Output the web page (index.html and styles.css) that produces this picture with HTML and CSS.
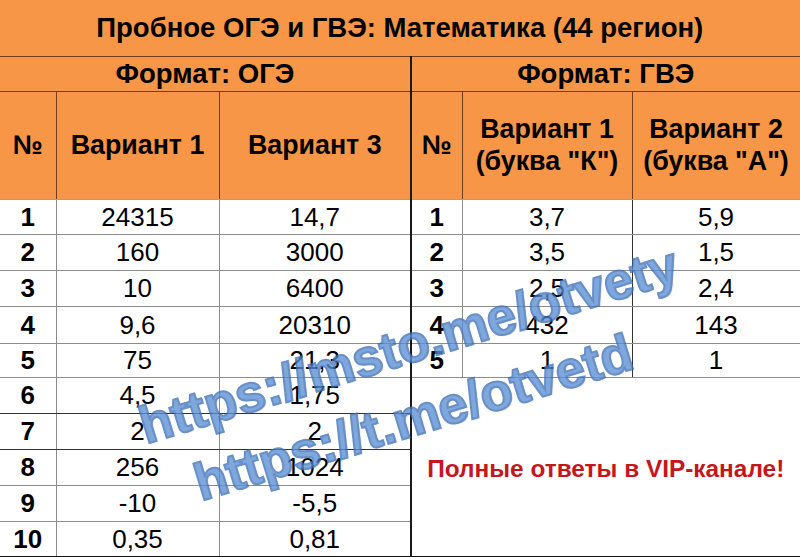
FILE: index.html
```html
<!DOCTYPE html>
<html lang="ru">
<head>
<meta charset="utf-8">
<title>Пробное ОГЭ и ГВЭ: Математика (44 регион)</title>
<link rel="stylesheet" href="styles.css">
</head>
<body>
<div class="sheet">
  <table class="grid">
    <colgroup>
      <col class="c-num"><col class="c-v1"><col class="c-v3">
      <col class="c-num2"><col class="c-g1"><col class="c-g2">
    </colgroup>
    <tr class="r-title"><td colspan="6" class="title">Пробное ОГЭ и ГВЭ: Математика (44 регион)</td></tr>
    <tr class="r-format">
      <td colspan="3" class="fmt">Формат: ОГЭ</td>
      <td colspan="3" class="fmt sep">Формат: ГВЭ</td>
    </tr>
    <tr class="r-head">
      <td class="hd">№</td>
      <td class="hd">Вариант 1</td>
      <td class="hd">Вариант 3</td>
      <td class="hd sep">№</td>
      <td class="hd two">Вариант 1<br>(буква "К")</td>
      <td class="hd two">Вариант 2<br>(буква "А")</td>
    </tr>
    <tr class="r1"><td class="n">1</td><td>24315</td><td>14,7</td><td class="n sep">1</td><td class="dk">3,7</td><td>5,9</td></tr>
    <tr class="r2"><td class="n">2</td><td>160</td><td>3000</td><td class="n sep">2</td><td class="dk">3,5</td><td>1,5</td></tr>
    <tr class="r3"><td class="n">3</td><td>10</td><td>6400</td><td class="n sep">3</td><td class="dk">2,5</td><td>2,4</td></tr>
    <tr class="r4"><td class="n">4</td><td>9,6</td><td>20310</td><td class="n sep">4</td><td class="dk">432</td><td>143</td></tr>
    <tr class="r5"><td class="n">5</td><td>75</td><td>21,3</td><td class="n sep">5</td><td class="dk">1</td><td>1</td></tr>
    <tr class="r6"><td class="n">6</td><td>4,5</td><td>1,75</td><td colspan="3" rowspan="5" class="vip sep">Полные ответы в VIP-канале!</td></tr>
    <tr class="r7"><td class="n">7</td><td>2</td><td>2</td></tr>
    <tr class="r8"><td class="n">8</td><td>256</td><td>1024</td></tr>
    <tr class="r9"><td class="n">9</td><td>-10</td><td>-5,5</td></tr>
    <tr class="r10"><td class="n">10</td><td>0,35</td><td>0,81</td></tr>
  </table>
  <div class="wm wm1">https://msto.me/otvety</div>
  <div class="wm wm2">https://t.me/otvetd</div>
</div>
</body>
</html>
```
FILE: styles.css
```css
html, body {
  margin: 0;
  padding: 0;
  background: #ffffff;
}
.sheet {
  position: relative;
  width: 800px;
  height: 557px;
  overflow: hidden;
  font-family: "Liberation Sans", Arial, sans-serif;
  color: #000;
}
.grid {
  width: 800px;
  table-layout: fixed;
  border-collapse: collapse;
}
.c-num { width: 56px; }
.c-v1 { width: 163px; }
.c-v3 { width: 192px; }
.c-num2 { width: 51px; }
.c-g1 { width: 170px; }
.c-g2 { width: 168px; }

.grid td {
  padding: 0;
  text-align: center;
  vertical-align: middle;
  border: 1px solid #8c8c8c;
  font-size: 26px;
  line-height: 30px;
  white-space: nowrap;
}
.grid td:first-child { border-left: none; }
.grid td:last-child { border-right: 1px solid #333; }

.grid td.title, .grid td.fmt, .grid td.hd {
  background: #f79646;
  font-weight: bold;
  border-color: #6e3f1f;
}
.grid td.title {
  font-size: 27.5px;
  border-top: none;
}
.grid td.fmt { font-size: 27.5px; }
.grid td.hd { font-size: 26.8px; border-bottom-color: #d9915a; }
.grid td.hd.two { line-height: 32px; }

.r-title { height: 56px; }
.r-format { height: 35px; }
.r-head { height: 108px; }
.r1 { height: 35px; }
.r2 { height: 36px; }
.r3 { height: 36px; }
.r4 { height: 37px; }
.r5 { height: 34px; }
.r6 { height: 36px; }
.r7 { height: 36px; }
.r8 { height: 36px; }
.r9 { height: 36px; }
.r10 { height: 35px; }

.grid td.n { font-weight: bold; }
.grid td.sep { border-left: 2px solid #1a1a1a; }
.grid td.dk { border-left-color: #333; border-right-color: #333; }
.grid .r10 td { border-bottom: 1px solid #111; }
.grid .r6 td, .grid .r7 td { border-bottom-color: #333; }

.grid td.vip {
  color: #c4161c;
  font-weight: bold;
  font-size: 24.4px;
  border-bottom: 1px solid #111;
  padding-top: 4px;
}

.wm {
  position: absolute;
  font-family: "Liberation Sans", Arial, sans-serif;
  font-weight: bold;
  font-size: 52.5px;
  line-height: 52px;
  white-space: nowrap;
  color: #5a8fd4;
  -webkit-text-stroke: 2px #3f70b8;
  text-shadow: 1px 1px 1px rgba(30, 70, 140, 0.6);
  opacity: 0.78;
  transform-origin: 0 44px;
  transform: rotate(-17deg);
  pointer-events: none;
}
.wm1 { left: 146px; top: 400px; }
.wm2 { left: 201px; top: 457px; }
```
